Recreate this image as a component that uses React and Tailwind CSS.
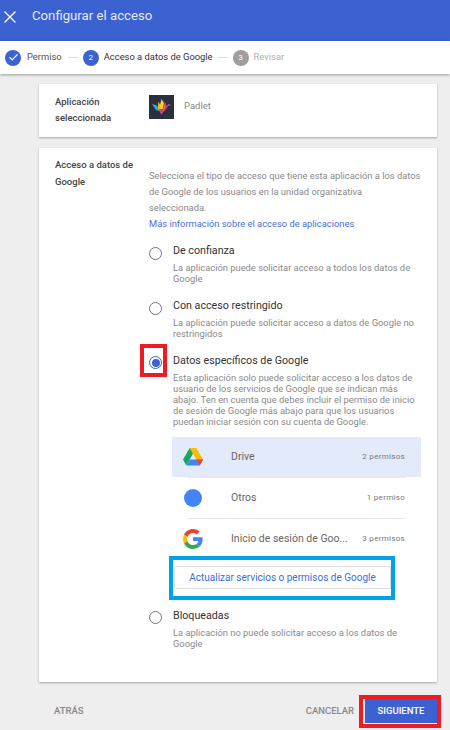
import { X, Check } from 'lucide-react';

const PadletLogo = () => (
  <div className="w-[25px] h-[24px] bg-[#2b2f3f] flex items-center justify-center">
    <svg width="21" height="18" viewBox="0 0 21 18">
      <path d="M1 6 L6 7.5 L8 13 L5 12 Z" fill="#27b5c9" />
      <path d="M7 3.5 L10 8 L10 15 L7 11 Z" fill="#f2b32c" />
      <path d="M10.5 1 L13 5 L11 15 L9 7 Z" fill="#f4d03f" />
      <path d="M14 3.5 L11 15 L14 12 L15 8 Z" fill="#e8703a" />
      <path d="M7.5 11 L10.5 17 L13.5 11 Z" fill="#c0459a" />
      <path d="M15 8 L18 5.5 L20 7.5 L17 8 L14 13 Z" fill="#d9386a" />
    </svg>
  </div>
);

const DriveLogo = () => (
  <svg width="20" height="18" viewBox="0 0 20 18">
    <path d="M6.7 0 L13.3 0 L20 11.6 L13.3 11.6 Z" fill="#fbbc04" />
    <path d="M6.7 0 L10 5.8 L3.3 17.5 L0 11.6 Z" fill="#1fa463" />
    <path d="M3.3 17.5 L6.7 11.6 L20 11.6 L16.7 17.5 Z" fill="#4285f4" />
    <path d="M16.7 17.5 L13.3 11.6 L20 11.6 Z" fill="#ea4335" />
  </svg>
);

const GoogleLogo = () => (
  <svg width="20" height="20" viewBox="0 0 48 48">
    <path fill="#EA4335" d="M24 9.5c3.54 0 6.71 1.22 9.21 3.6l6.85-6.85C35.9 2.38 30.47 0 24 0 14.62 0 6.51 5.38 2.56 13.22l7.98 6.19C12.43 13.72 17.74 9.5 24 9.5z" />
    <path fill="#4285F4" d="M46.98 24.55c0-1.57-.15-3.09-.38-4.55H24v9.02h12.94c-.58 2.96-2.26 5.48-4.78 7.18l7.73 6c4.51-4.18 7.09-10.36 7.09-17.65z" />
    <path fill="#FBBC05" d="M10.53 28.59c-.48-1.45-.76-2.99-.76-4.59s.27-3.14.76-4.59l-7.98-6.19C.92 16.46 0 20.12 0 24c0 3.88.92 7.54 2.56 10.78l7.97-6.19z" />
    <path fill="#34A853" d="M24 48c6.48 0 11.93-2.13 15.89-5.81l-7.73-6c-2.15 1.45-4.92 2.3-8.16 2.3-6.26 0-11.57-4.22-13.47-9.91l-7.98 6.19C6.51 42.62 14.62 48 24 48z" />
  </svg>
);

const Radio = ({ checked }) => (
  <span className={`w-[13px] h-[13px] rounded-full border flex items-center justify-center shrink-0 ${checked ? 'border-[#3b62d0]' : 'border-[#757575]'}`}>
    {checked && <span className="w-[8px] h-[8px] rounded-full bg-[#3b62d0]" />}
  </span>
);

const Option = ({ title, checked, tight, className, children }) => (
  <div className={`flex ${className}`}>
    <div className={`w-[24px] ${tight ? 'pt-[2px]' : 'pt-[3px]'}`}><Radio checked={checked} /></div>
    <div className="flex-1">
      <div className="text-[10.7px] leading-[14px] text-[#333]">{title}</div>
      <p className="mt-[4px] text-[9.35px] leading-[11px] text-[#8a8a8a]">{children}</p>
    </div>
  </div>
);

const services = [
  { name: 'Drive', perms: '2 permisos', logo: <DriveLogo />, active: true },
  { name: 'Otros', perms: '1 permiso', logo: <span className="block w-[18px] h-[18px] rounded-full bg-[#4285f4]" /> },
  { name: 'Inicio de sesión de Goo...', perms: '3 permisos', logo: <GoogleLogo /> },
];

export default function App() {
  return (
    <div className="relative w-[450px] h-[730px] overflow-hidden bg-[#eeeeee] font-['Roboto',sans-serif]">
      {/* Header */}
      <div className="h-[41px] bg-[#3b62d0] flex items-start pt-[4px] text-white">
        <X size={20} strokeWidth={1.6} className="mt-[3px]" />
        <span className="ml-[12px] text-[13.2px] leading-[24px] font-normal text-[#e4eafa]">Configurar el acceso</span>
      </div>

      {/* Stepper */}
      <div className="h-[33px] bg-white shadow-[0_1px_3px_rgba(0,0,0,0.35)] flex items-center pl-[5px] text-[9.4px]">
        <span className="w-[16px] h-[16px] rounded-full bg-[#3b62d0] flex items-center justify-center text-white">
          <Check size={11} strokeWidth={2.5} />
        </span>
        <span className="ml-[6px] text-[#555]">Permiso</span>
        <span className="ml-[6px] mr-[5px] w-[10px] h-px bg-[#dddddd]" />
        <span className="w-[16px] h-[16px] rounded-full bg-[#3b62d0] flex items-center justify-center text-white text-[8px]">2</span>
        <span className="ml-[5px] text-[#333]">Acceso a datos de Google</span>
        <span className="ml-[5px] mr-[5px] w-[10px] h-px bg-[#dddddd]" />
        <span className="w-[16px] h-[16px] rounded-full bg-[#9e9e9e] flex items-center justify-center text-white text-[8px]">3</span>
        <span className="ml-[5px] text-[#b0b0b0]">Revisar</span>
      </div>

      {/* Selected app */}
      <div className="ml-[39px] w-[398px] mt-[10px] h-[53px] bg-white shadow-[0_1px_2px_rgba(0,0,0,0.3)] flex">
        <div className="w-[110px] pl-[16px] pt-[10px] text-[9.5px] leading-[16px] font-medium text-[#444]">
          Aplicación seleccionada
        </div>
        <div className="pt-[11px]"><PadletLogo /></div>
        <div className="ml-[10px] pt-[15px] text-[9.5px] leading-[14px] text-[#8a8a8a]">Padlet</div>
      </div>

      {/* Access card */}
      <div className="ml-[39px] w-[398px] mt-[11px] h-[534px] bg-white shadow-[0_1px_2px_rgba(0,0,0,0.3)] flex">
        <div className="w-[110px] pl-[16px] pt-[8px] pr-[12px] text-[9.5px] leading-[17px] font-medium text-[#444]">
          Acceso a datos de Google
        </div>
        <div className="flex-1 pt-[20px] pr-[16px]">
          <p className="mr-[-4px] text-[9.35px] leading-[16px] text-[#8a8a8a]">
            Selecciona el tipo de acceso que tiene esta aplicación a los datos de Google de los usuarios en la unidad organizativa<br />seleccionada.
          </p>
          <a className="block text-[9.35px] leading-[16px] text-[#4a6fd8]">Más información sobre el acceso de aplicaciones</a>

          <Option title="De confianza" className="mt-[12px]">
            La aplicación puede solicitar acceso a todos los datos de Google
          </Option>
          <Option title="Con acceso restringido" className="mt-[15px]">
            La aplicación puede solicitar acceso a datos de Google no restringidos
          </Option>
          <Option title="Datos específicos de Google" checked tight className="mt-[15px]">
            Esta aplicación solo puede solicitar acceso a los datos de usuario de los servicios de Google que se indican más abajo. Ten en cuenta que debes incluir el permiso de inicio de sesión de Google más abajo para que los usuarios puedan iniciar sesión con su cuenta de Google.
          </Option>

          <div className="ml-[23px] mt-[10px]">
            {services.map((s, i) => (
              <div key={s.name}>
                {i > 0 && <div className="mx-[16px] h-px bg-[#e8e8e8]" />}
                <div className={`h-[40px] flex items-center ${s.active ? 'bg-[#e3ebfa]' : ''}`}>
                  <div className="w-[42px] flex justify-center">{s.logo}</div>
                  <span className="ml-[17px] flex-1 text-[10.5px] text-[#666]">{s.name}</span>
                  <span className="mr-[16px] text-[8px] tracking-[0.3px] text-[#777]">{s.perms}</span>
                </div>
              </div>
            ))}
            <button className="ml-[2px] mt-[7px] w-[217px] h-[23px] border border-[#dddddd] text-[10px] text-[#3b6fd8]">
              Actualizar servicios o permisos de Google
            </button>
          </div>

          <Option title="Bloqueadas" tight className="mt-[20px]">
            La aplicación no puede solicitar acceso a los datos de Google
          </Option>
        </div>
      </div>

      {/* Footer */}
      <div className="ml-[39px] w-[398px] mt-[17px] flex items-center text-[9.5px] font-medium">
        <span className="ml-[15px] text-[#888]">ATRÁS</span>
        <span className="ml-auto text-[#888]">CANCELAR</span>
        <button className="ml-[11px] w-[72px] h-[24px] bg-[#3b62d0] text-white">SIGUIENTE</button>
      </div>

      {/* Screenshot annotations */}
      <div className="absolute left-[140px] top-[344px] w-[27px] h-[33px] border-[4px] border-[#ed1c24]" />
      <div className="absolute left-[169px] top-[556px] w-[226px] h-[44px] border-[4px] border-[#00a2e8]" />
      <div className="absolute left-[359px] top-[695px] w-[82px] h-[33px] border-[4px] border-[#ed1c24]" />
    </div>
  );
}
